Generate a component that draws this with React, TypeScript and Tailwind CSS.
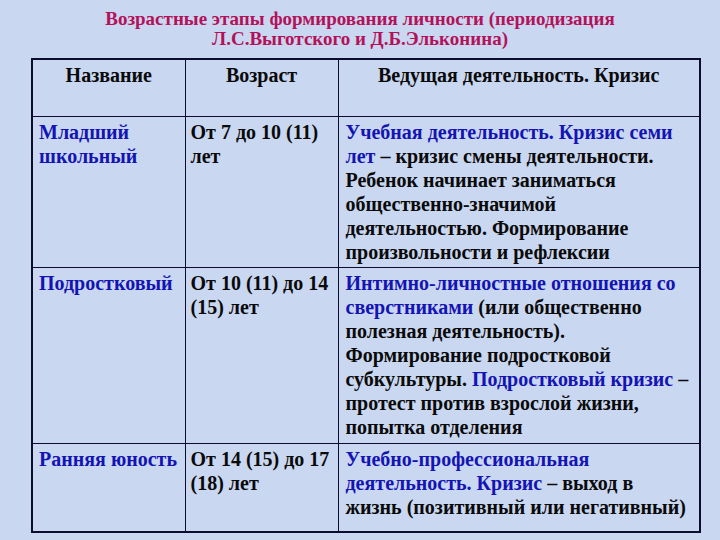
import * as React from "react";

// serif face put on every text element directly
const serif = "font-['Liberation_Serif',serif]";

function B({ children }: { children: React.ReactNode }) {
  return <span className="font-['Liberation_Serif',serif] text-[#1414b4]">{children}</span>;
}

const rows = [
  {
    name: (
      <>
        Младший
        <br />
        школьный
      </>
    ),
    age: (
      <>
        От 7 до 10 (11)
        <br />
        лет
      </>
    ),
    text: (
      <>
        <B>Учебная деятельность. Кризис семи</B>
        <br />
        <B>лет</B> – кризис смены деятельности.
        <br />
        Ребенок начинает заниматься
        <br />
        общественно-значимой
        <br />
        деятельностью. Формирование
        <br />
        произвольности и рефлексии
      </>
    ),
    h: "h-[151px]",
  },
  {
    name: <>Подростковый</>,
    age: (
      <>
        От 10 (11) до 14
        <br />
        (15) лет
      </>
    ),
    text: (
      <>
        <B>Интимно-личностные отношения со</B>
        <br />
        <B>сверстниками</B> (или общественно
        <br />
        полезная деятельность).
        <br />
        Формирование подростковой
        <br />
        субкультуры. <B>Подростковый кризис</B> –
        <br />
        протест против взрослой жизни,
        <br />
        попытка отделения
      </>
    ),
    h: "h-[176px]",
  },
  {
    name: <>Ранняя юность</>,
    age: (
      <>
        От 14 (15) до 17
        <br />
        (18) лет
      </>
    ),
    text: (
      <>
        <B>Учебно-профессиональная</B>
        <br />
        <B>деятельность. Кризис</B> – выход в
        <br />
        жизнь (позитивный или негативный)
      </>
    ),
    h: "h-[89px]",
  },
];

const cell = "border border-[#0c0c30] align-top font-['Liberation_Serif',serif]";

export default function App() {
  return (
    <div className="w-[720px] h-[540px] overflow-hidden bg-[#c9d7f1]">
      {/* title */}
      <div className="font-['Liberation_Serif',serif] pt-[9px] h-[58px] text-center text-[19px] leading-[20px] font-bold text-[#b3125a]">
        Возрастные этапы формирования личности (периодизация
        <br />
        Л.С.Выготского и Д.Б.Эльконина)
      </div>

      {/* table */}
      <table className={`${serif} ml-[31px] w-[670px] table-fixed border-collapse border-2 border-[#0c0c30] text-[20px] leading-[24px] font-bold text-[#0a0a0a]`}>
        <colgroup>
          <col className="w-[153px]" />
          <col className="w-[153px]" />
          <col />
        </colgroup>
        <thead>
          <tr className="h-[57px]">
            <th className={`${cell} pt-[3px] text-center`}>Название</th>
            <th className={`${cell} pt-[3px] text-center`}>Возраст</th>
            <th className={`${cell} pt-[3px] text-center`}>Ведущая деятельность. Кризис</th>
          </tr>
        </thead>
        <tbody>
          {rows.map((r, i) => (
            <tr key={i} className={r.h}>
              <td className={`${cell} pt-[3px] pl-[6px] text-[#1414b4] whitespace-nowrap`}>{r.name}</td>
              <td className={`${cell} pt-[3px] pl-[5px] whitespace-nowrap`}>{r.age}</td>
              <td className={`${cell} pt-[3px] pl-[7px] whitespace-nowrap`}>{r.text}</td>
            </tr>
          ))}
        </tbody>
      </table>
    </div>
  );
}
